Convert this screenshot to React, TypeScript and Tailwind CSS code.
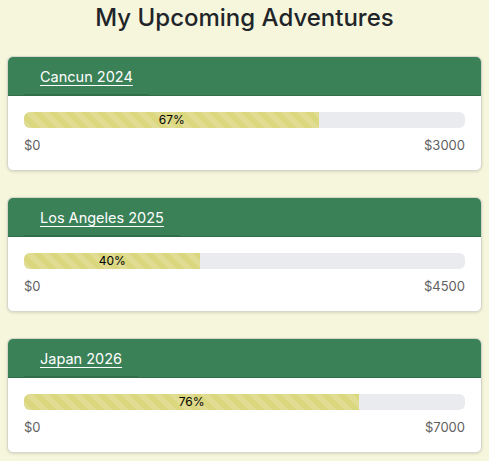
import React from "react";

const trips = [
  { name: "Cancun 2024", pct: 67, goal: 3000 },
  { name: "Los Angeles 2025", pct: 40, goal: 4500 },
  { name: "Japan 2026", pct: 76, goal: 7000 },
];

export default function App() {
  return (
    <div className="min-h-[461px] bg-[#f6f6dc] px-[7px] pb-4 text-[#212529] [font-family:Inter,'Liberation_Sans',sans-serif]">
      <h2 className="pt-[3px] text-center text-[24px] font-medium leading-[29px]">My Upcoming Adventures</h2>
      <div className="mt-[24px] flex flex-col gap-[26px]">
        {trips.map((t) => (
          <div key={t.name} className="overflow-hidden rounded-[6px] border border-[#d6d6cc] bg-white shadow-[0_1px_3px_rgba(0,0,0,0.12)]">
            <div className="border-b border-[#2f6e49] bg-[#3b8157] px-4 pt-[2px]">
              <div className="inline-block border-b border-[#32704b] px-4 pb-[6px] pt-[5px]">
                <a href="#" className="text-[14.5px] leading-[21px] text-white underline underline-offset-[3px]">
                  {t.name}
                </a>
              </div>
            </div>
            <div className="px-4 pb-[14px] pt-4">
              <div className="flex h-4 overflow-hidden rounded-[6px] bg-[#e9ebef]">
                <div
                  className="flex items-center justify-center bg-[#dad77f] bg-[linear-gradient(45deg,rgba(255,255,255,.15)_25%,transparent_25%,transparent_50%,rgba(255,255,255,.15)_50%,rgba(255,255,255,.15)_75%,transparent_75%,transparent)] bg-[length:16px_16px] text-[12px] text-black"
                  style={{ width: `${t.pct}%` }}
                >
                  {t.pct}%
                </div>
              </div>
              <div className="mt-[7px] flex justify-between text-[13px] leading-[21px] text-[#5f5f5f]">
                <span>$0</span>
                <span>${t.goal}</span>
              </div>
            </div>
          </div>
        ))}
      </div>
    </div>
  );
}
